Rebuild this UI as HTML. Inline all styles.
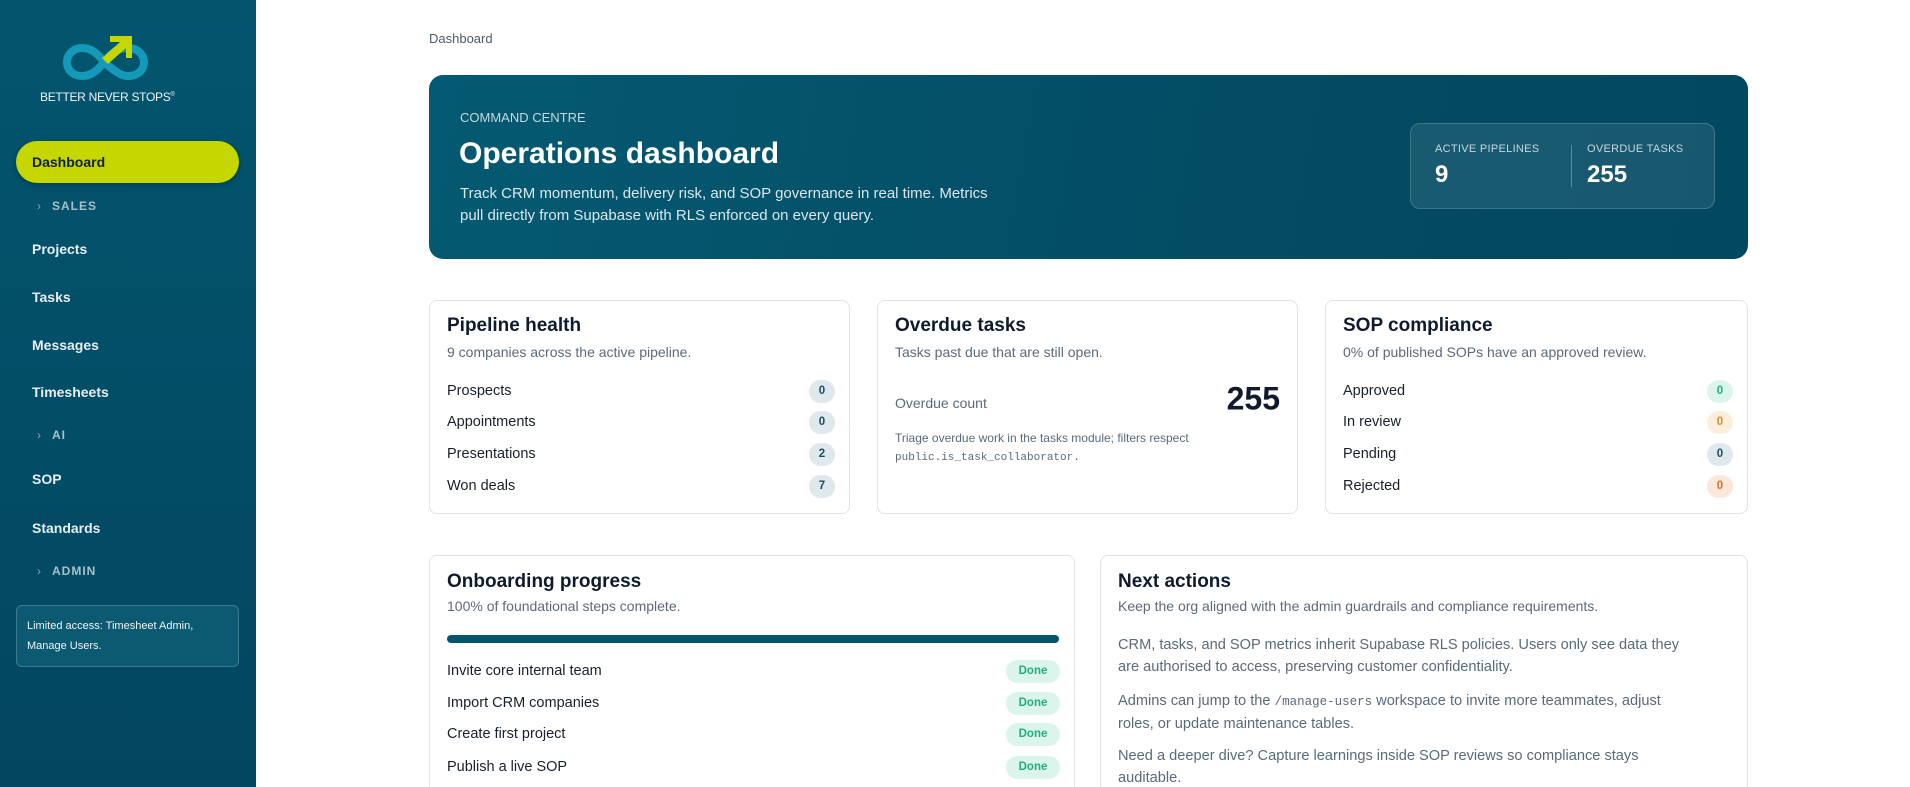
<!DOCTYPE html>
<html style="overflow:hidden;width:1910px;height:787px"><head><meta charset="utf-8"><style>
*{box-sizing:border-box;margin:0;padding:0}
body{width:1910px;height:787px;overflow:hidden;background:#fff;font-family:"Liberation Sans",sans-serif;position:relative;color:#0f1b2d}
.a{position:absolute;white-space:nowrap}
#sb{position:absolute;left:0;top:0;width:256px;height:787px;background:linear-gradient(180deg,#03556e,#034660)}
.nav{position:absolute;left:32px;color:#e6eef2;font-weight:bold;font-size:14px;transform:translateY(-50%)}
.grp{position:absolute;left:37px;color:#a9c0ca;font-weight:bold;font-size:12px;letter-spacing:1px;transform:translateY(-50%)}
.grp span{display:inline-block;width:15px;font-weight:normal;color:#8aa7b3}
.card{position:absolute;border:1px solid #dde3e8;border-radius:8px;background:#fff}
.ct{position:absolute;left:17px;font-size:19px;font-weight:bold;color:#0f1b2d;transform:translateY(-50%)}
.cs{position:absolute;left:17px;font-size:14px;color:#5a6a7a;transform:translateY(-50%);white-space:nowrap}
.row{position:absolute;left:17px;right:14px;height:24px;transform:translateY(-50%);font-size:14.5px;color:#17202c;display:flex;justify-content:space-between;align-items:center}
.b{min-width:26px;height:23px;border-radius:12px;background:#dfe8ed;color:#1d4b5e;font-size:11.5px;font-weight:bold;display:flex;align-items:center;justify-content:center}
.p{position:absolute;left:17px;font-size:14.6px;color:#5a6a7a;line-height:22px;white-space:nowrap}
</style></head><body>
<div id="sb">
<svg class="a" style="left:62px;top:34px" width="88" height="50" viewBox="0 0 88 50">
<path d="M44 30 C36 20 30 14 20 14 C11 14 5 21 5 28 C5 36 11 42 20 42 C30 42 36 36 44 26 C52 16 58 14 66 14 C76 14 82 21 82 28 C82 36 76 42 66 42 C58 42 52 36 44 30Z" fill="none" stroke="#149ab8" stroke-width="8"/>
<path d="M40 24 L58 8 L48 8 L48 2 L70 2 L70 24 L64 24 L64 14 L46 30Z" fill="#c5d600"/>
</svg>
<div class="a" style="left:40px;top:90px;font-size:12px;color:#eef4f6;letter-spacing:-0.3px">BETTER NEVER STOPS<sup style="font-size:6px">®</sup></div>
<div class="a" style="left:16px;top:141px;width:223px;height:42px;border-radius:21px;background:#c5d600;box-shadow:0 2px 6px rgba(0,0,0,.25)"></div>
<div class="nav" style="top:162px;color:#10202a">Dashboard</div>
<div class="grp" style="top:206px"><span>›</span>SALES</div>
<div class="nav" style="top:249px">Projects</div>
<div class="nav" style="top:297px">Tasks</div>
<div class="nav" style="top:345px">Messages</div>
<div class="nav" style="top:392px">Timesheets</div>
<div class="grp" style="top:435px"><span>›</span>AI</div>
<div class="nav" style="top:479px">SOP</div>
<div class="nav" style="top:528px">Standards</div>
<div class="grp" style="top:571px"><span>›</span>ADMIN</div>
<div class="a" style="left:16px;top:605px;width:223px;height:62px;border:1px solid #3f7a8e;border-radius:6px;background:#0c5a72;color:#eef4f6;font-size:11px;line-height:20px;padding:10px 10px;white-space:normal">Limited access: Timesheet Admin, Manage Users.</div>
</div>

<div class="a" style="left:429px;top:31px;font-size:13px;color:#4b5a68">Dashboard</div>

<div class="a" style="left:429px;top:75px;width:1319px;height:184px;border-radius:14px;background:linear-gradient(100deg,#045a72,#034c64 60%,#024860)"></div>
<div class="a" style="left:460px;top:110px;font-size:13px;color:#c6d8e0">COMMAND CENTRE</div>
<div class="a" style="left:459px;top:137px;font-size:30px;font-weight:bold;color:#fff">Operations dashboard</div>
<div class="a" style="left:460px;top:183px;font-size:15px;line-height:22px;color:#dbe7ec">Track CRM momentum, delivery risk, and SOP governance in real time. Metrics<br>pull directly from Supabase with RLS enforced on every query.</div>
<div class="a" style="left:1410px;top:123px;width:305px;height:86px;border:1px solid #3e7688;border-radius:10px;background:rgba(255,255,255,.09)"></div>
<div class="a" style="left:1571px;top:145px;width:1px;height:42px;background:#5d8c9b"></div>
<div class="a" style="left:1435px;top:143px;font-size:11px;color:#c6d8e0;letter-spacing:.3px">ACTIVE PIPELINES</div>
<div class="a" style="left:1587px;top:143px;font-size:11px;color:#c6d8e0;letter-spacing:.3px">OVERDUE TASKS</div>
<div class="a" style="left:1435px;top:161px;font-size:24px;font-weight:bold;color:#fff">9</div>
<div class="a" style="left:1587px;top:161px;font-size:24px;font-weight:bold;color:#fff">255</div>

<div class="card" style="left:429px;top:300px;width:421px;height:214px">
<div class="ct" style="top:25px">Pipeline health</div>
<div class="cs" style="top:51px">9 companies across the active pipeline.</div>
<div class="row" style="top:90px"><span>Prospects</span><span class="b">0</span></div>
<div class="row" style="top:121px"><span>Appointments</span><span class="b">0</span></div>
<div class="row" style="top:153px"><span>Presentations</span><span class="b">2</span></div>
<div class="row" style="top:185px"><span>Won deals</span><span class="b">7</span></div>
</div>
<div class="card" style="left:877px;top:300px;width:421px;height:214px">
<div class="ct" style="top:25px">Overdue tasks</div>
<div class="cs" style="top:51px">Tasks past due that are still open.</div>
<div class="cs" style="top:102px;font-size:14px">Overdue count</div>
<div class="a" style="right:17px;top:98px;transform:translateY(-50%);font-size:32px;font-weight:bold;color:#0f1b2d">255</div>
<div class="cs" style="top:137px;font-size:12px">Triage overdue work in the tasks module; filters respect</div>
<div class="cs" style="top:157px;font-size:11px;font-family:'Liberation Mono',monospace">public.is_task_collaborator.</div>
</div>
<div class="card" style="left:1325px;top:300px;width:423px;height:214px">
<div class="ct" style="top:25px">SOP compliance</div>
<div class="cs" style="top:51px">0% of published SOPs have an approved review.</div>
<div class="row" style="top:90px"><span>Approved</span><span class="b" style="background:#dcf5ec;color:#1fae7f">0</span></div>
<div class="row" style="top:121px"><span>In review</span><span class="b" style="background:#fdeedb;color:#d68a2e">0</span></div>
<div class="row" style="top:153px"><span>Pending</span><span class="b">0</span></div>
<div class="row" style="top:185px"><span>Rejected</span><span class="b" style="background:#fde6da;color:#d0702e">0</span></div>
</div>

<div class="card" style="left:429px;top:555px;width:646px;height:250px">
<div class="ct" style="top:26px">Onboarding progress</div>
<div class="cs" style="top:50px">100% of foundational steps complete.</div>
<div class="a" style="left:17px;top:79px;width:612px;height:8px;border-radius:4px;background:#03546c"></div>
<div class="row" style="top:115px"><span>Invite core internal team</span><span class="b" style="background:#dcf5ec;color:#1fae7f;width:54px">Done</span></div>
<div class="row" style="top:147px"><span>Import CRM companies</span><span class="b" style="background:#dcf5ec;color:#1fae7f;width:54px">Done</span></div>
<div class="row" style="top:178px"><span>Create first project</span><span class="b" style="background:#dcf5ec;color:#1fae7f;width:54px">Done</span></div>
<div class="row" style="top:211px"><span>Publish a live SOP</span><span class="b" style="background:#dcf5ec;color:#1fae7f;width:54px">Done</span></div>
</div>
<div class="card" style="left:1100px;top:555px;width:648px;height:250px">
<div class="ct" style="top:26px">Next actions</div>
<div class="cs" style="top:50px">Keep the org aligned with the admin guardrails and compliance requirements.</div>
<div class="p" style="top:78px">CRM, tasks, and SOP metrics inherit Supabase RLS policies. Users only see data they<br>are authorised to access, preserving customer confidentiality.</div>
<div class="p" style="top:134px">Admins can jump to the <span style="font-family:'Liberation Mono',monospace;font-size:12.5px">/manage-users</span> workspace to invite more teammates, adjust<br>roles, or update maintenance tables.</div>
<div class="p" style="top:189px">Need a deeper dive? Capture learnings inside SOP reviews so compliance stays<br>auditable.</div>
</div>
</body></html>
